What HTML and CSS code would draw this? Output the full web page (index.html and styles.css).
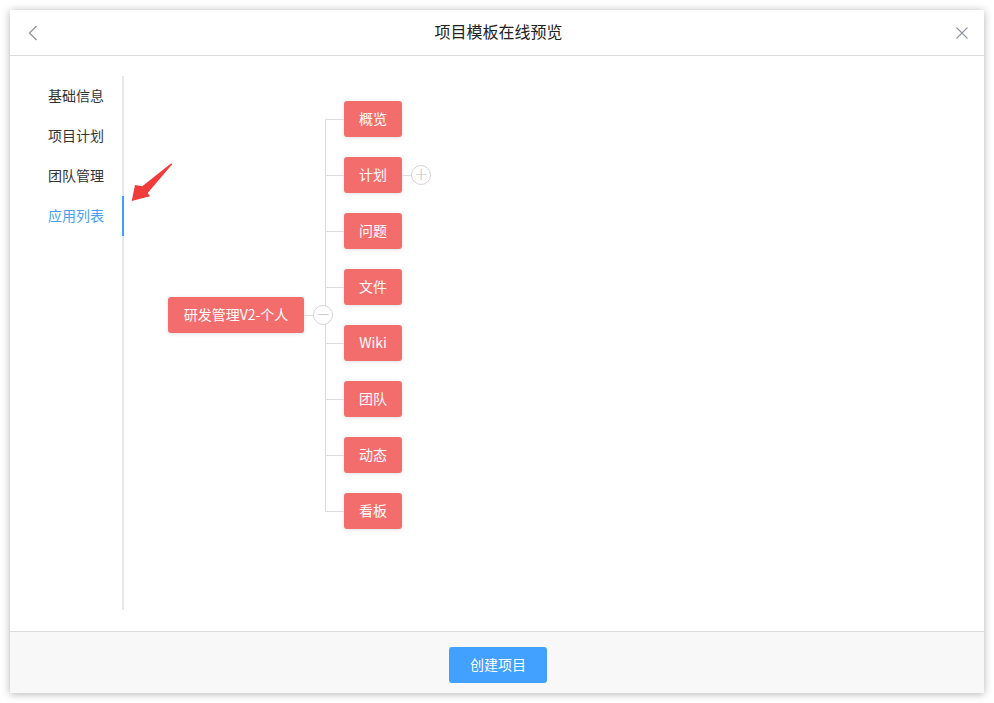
FILE: index.html
```html
<!DOCTYPE html>
<html lang="zh">
  <head>
    <meta charset="UTF-8" />
    <meta name="viewport" content="width=device-width, initial-scale=1.0" />
    <title>项目模板在线预览</title>
    <link rel="stylesheet" href="styles.css">
  </head>
  <body>
    <div class="modal">
      <div class="modal-header">
        <span class="icon-btn">
          <svg width="10" height="16" viewBox="0 0 10 16"><path d="M8.5 1 L1.5 8 L8.5 15" fill="none" stroke="#8f959e" stroke-width="1.3"/></svg>
        </span>
        <h1>项目模板在线预览</h1>
        <span class="icon-btn">
          <svg width="12" height="12" viewBox="0 0 12 12"><path d="M0.5 0.5 L11.5 11.5 M11.5 0.5 L0.5 11.5" fill="none" stroke="#8f959e" stroke-width="1.1"/></svg>
        </span>
      </div>

      <div class="modal-body">
        <div class="sidebar">
          <a href="#">基础信息</a>
          <a href="#">项目计划</a>
          <a href="#">团队管理</a>
          <a href="#" class="activo">应用列表</a>
        </div>

        <div class="tree">
          <div class="nodo raiz">研发管理V2-个人</div>
          <div class="enlace">
            <span class="toggle">−</span>
          </div>
          <div class="hijos" id="hijos"></div>
        </div>

        <svg class="flecha" width="60" height="60" viewBox="0 0 60 60">
          <polygon points="11.7,49 15,33 22.3,34.3 51.2,11.2 52.2,12.2 27.7,41 30,44.3" fill="#f23b3b"/>
        </svg>
      </div>

      <div class="modal-footer">
        <button class="btn-crear">创建项目</button>
      </div>
    </div>

    <script>
      const apps = ["概览", "计划", "问题", "文件", "Wiki", "团队", "动态", "看板"];
      const contenedor = document.getElementById("hijos");
      apps.forEach((nombre, i) => {
        const div = document.createElement("div");
        div.className = "hijo";
        div.innerHTML = `<div class="nodo">${nombre}</div>` +
          (i === 1 ? `<span class="mini-enlace"></span><span class="toggle">+</span>` : "");
        contenedor.appendChild(div);
      });
    </script>
  </body>
</html>
```

FILE: styles.css
```css
body {
  margin: 0;
  padding: 10px;
  background: #fff;
  font-family: "Noto Sans CJK SC", "Liberation Sans", sans-serif;
  color: #333;
}
.modal {
  width: 974px;
  height: 683px;
  display: flex;
  flex-direction: column;
  background: #fff;
  box-shadow: 0 1px 8px rgba(0, 0, 0, 0.3);
}
.modal-header {
  height: 45px;
  border-bottom: 1px solid #dcdcdc;
  display: flex;
  align-items: center;
  justify-content: space-between;
  padding: 0 16px 0 17px;
}
.modal-header h1 {
  margin: 0 0 3px 2px;
  font-size: 16px;
  font-weight: normal;
  color: #222;
  line-height: 20px;
}
.icon-btn {
  display: flex;
  width: 12px;
  justify-content: center;
  margin-top: 1px;
}
.modal-body {
  flex: 1;
  display: flex;
  align-items: flex-start;
  padding: 20px 0 21px;
  position: relative;
}
.sidebar {
  width: 112px;
  align-self: stretch;
  border-right: 2px solid #e4e7ef;
}
.sidebar a {
  display: block;
  height: 40px;
  line-height: 38px;
  padding-left: 38px;
  font-size: 14px;
  color: #333;
  text-decoration: none;
  margin-right: -2px;
}
.sidebar a.activo {
  color: #4a9ff5;
  border-right: 2px solid #409eff;
}
.tree {
  display: flex;
  align-items: center;
  margin: 25px 0 0 44px;
}
.nodo {
  height: 36px;
  line-height: 35px;
  padding: 0 14px;
  min-width: 30px;
  text-align: center;
  background: #f46d6d;
  color: #fff;
  font-size: 14px;
  border-radius: 3px;
  box-shadow: 0 1px 4px rgba(0, 0, 0, 0.12);
  white-space: nowrap;
}
.raiz {
  width: 108px;
}
.enlace {
  position: relative;
  width: 21px;
  height: 1px;
  background: #dcdcdc;
}
.enlace .toggle {
  position: absolute;
  left: 9px;
  top: -10px;
}
.toggle {
  width: 18px;
  height: 18px;
  border: 1px solid #d4d4d4;
  border-radius: 50%;
  background: #fff;
  color: #c4c4c4;
  font-size: 17px;
  line-height: 17px;
  text-align: center;
  font-family: "DejaVu Sans", sans-serif;
  font-weight: 200;
  z-index: 1;
}
.hijos {
  position: relative;
  display: flex;
  flex-direction: column;
  gap: 20px;
  padding-left: 19px;
}
.hijos::before {
  content: "";
  position: absolute;
  left: 0;
  top: 18px;
  bottom: 18px;
  width: 1px;
  background: #dcdcdc;
}
.hijo {
  position: relative;
  display: flex;
  align-items: center;
}
.hijo::before {
  content: "";
  position: absolute;
  left: -19px;
  top: 18px;
  width: 19px;
  height: 1px;
  background: #dcdcdc;
}
.mini-enlace {
  width: 9px;
  height: 1px;
  background: #dcdcdc;
}
.flecha {
  position: absolute;
  left: 110px;
  top: 96px;
}
.modal-footer {
  height: 61px;
  border-top: 1px solid #dcdcdc;
  background: #f8f8f8;
  display: flex;
  justify-content: center;
  align-items: flex-start;
}
.btn-crear {
  margin: 15px 0 0 2px;
  width: 98px;
  height: 36px;
  padding: 0 0 2px;
  border: none;
  border-radius: 3px;
  background: #42a0ff;
  color: #fff;
  font-size: 14px;
  font-family: inherit;
}
```
